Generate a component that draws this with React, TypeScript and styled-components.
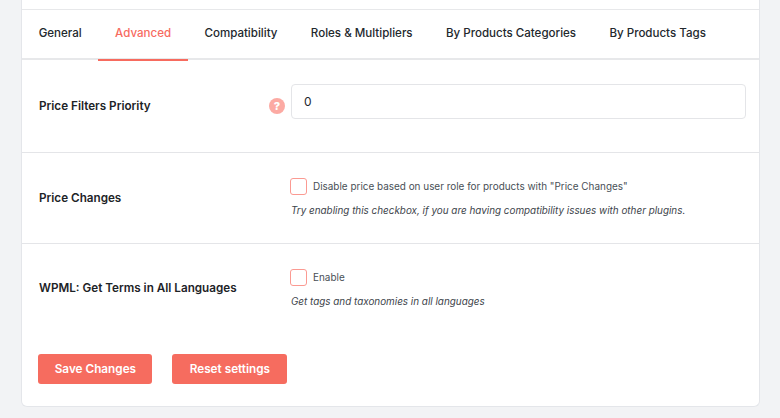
import React from "react";
import styled, { createGlobalStyle } from "styled-components";

const Global = createGlobalStyle`
  html, body { margin: 0; padding: 0; background: #f2f3f5; }
  body { font-family: Inter, "Liberation Sans", sans-serif; height: 418px; overflow: hidden; }
`;

const Page = styled.div`
  width: 780px;
  height: 418px;
  padding-left: 21px;
  box-sizing: border-box;
`;

const Card = styled.main`
  width: 739px;
  height: 407px;
  box-sizing: border-box;
  background: #fff;
  border: 1px solid #e4e6ea;
  border-top: 0;
  border-radius: 0 0 6px 6px;
  padding-top: 9px;
  display: flex;
  flex-direction: column;
`;

const Tabs = styled.nav`
  display: flex;
  height: 51px;
  box-sizing: border-box;
  border-top: 1px solid #e7e8ea;
  border-bottom: 2px solid #e7e8ea;
`;

const Tab = styled.div<{ $active?: boolean }>`
  height: 51px;
  box-sizing: border-box;
  padding: 0 16.7px 4px;
  display: flex;
  align-items: center;
  font-size: 11.55px;
  font-weight: 500;
  white-space: nowrap;
  color: ${(p) => (p.$active ? "#f76b5f" : "#23282d")};
  border-bottom: 2px solid ${(p) => (p.$active ? "#f76b5f" : "transparent")};
`;

const Row = styled.section<{ $height: number; $divider?: boolean }>`
  height: ${(p) => p.$height}px;
  box-sizing: border-box;
  display: flex;
  padding-left: 17px;
  border-bottom: ${(p) => (p.$divider ? "1px solid #e4e5e8" : "0")};
`;

const Label = styled.h3<{ $top: number }>`
  width: 230px;
  flex: none;
  margin: 0;
  padding-top: ${(p) => p.$top}px;
  font-size: 11.7px;
  line-height: 16px;
  font-weight: 600;
  color: #1d2327;
`;

const Help = styled.span`
  width: 16px;
  height: 16px;
  flex: none;
  margin: 38px 6px 0 0;
  border-radius: 50%;
  background: #fcaaa3;
  color: #fff;
  font-size: 11px;
  font-weight: 800;
  line-height: 16px;
  text-align: center;
`;

const Input = styled.div`
  width: 455px;
  height: 35px;
  margin-top: 24px;
  box-sizing: border-box;
  border: 1px solid #e4e5e8;
  border-radius: 4px;
  padding-left: 12px;
  font-size: 12px;
  line-height: 33px;
  color: #23282d;
`;

const Control = styled.div<{ $top: number; $left: number }>`
  margin-left: ${(p) => p.$left}px;
  padding-top: ${(p) => p.$top}px;
`;

const CheckLine = styled.label`
  display: flex;
  align-items: center;
  gap: 6px;
  font-size: 9.93px;
  line-height: 17px;
  color: #484f56;
`;

const Box = styled.span`
  width: 17px;
  height: 17px;
  box-sizing: border-box;
  border: 1px solid #fb9a92;
  border-radius: 3px;
  background: #fff;
`;

const Note = styled.p`
  margin: 8px 0 0 1px;
  font-size: 9.9px;
  line-height: 14px;
  font-style: italic;
  color: #3c434a;
`;

const Actions = styled.footer`
  display: flex;
  gap: 20px;
  padding: 15px 0 0 16.4px;
`;

const Button = styled.button`
  height: 30px;
  padding: 0;
  border: 0;
  border-radius: 3px;
  background: #f66c5f;
  color: #fff;
  font-family: inherit;
  font-size: 11.75px;
  font-weight: 600;
`;

const SaveButton = styled(Button)`
  width: 114px;
`;

const ResetButton = styled(Button)`
  width: 115px;
`;

export default function App() {
  return (
    <Page>
      <Global />
      <Card>
        <Tabs>
          <Tab>General</Tab>
          <Tab $active>Advanced</Tab>
          <Tab>Compatibility</Tab>
          <Tab>Roles &amp; Multipliers</Tab>
          <Tab>By Products Categories</Tab>
          <Tab>By Products Tags</Tab>
        </Tabs>
        <Row $height={93} $divider>
          <Label $top={38}>Price Filters Priority</Label>
          <Help>?</Help>
          <Input>0</Input>
        </Row>
        <Row $height={91} $divider>
          <Label $top={37}>Price Changes</Label>
          <Control $top={25} $left={21}>
            <CheckLine>
              <Box />
              Disable price based on user role for products with "Price Changes"
            </CheckLine>
            <Note>Try enabling this checkbox, if you are having compatibility issues with other plugins.</Note>
          </Control>
        </Row>
        <Row $height={95}>
          <Label $top={36}>WPML: Get Terms in All Languages</Label>
          <Control $top={25} $left={21}>
            <CheckLine>
              <Box />
              Enable
            </CheckLine>
            <Note>Get tags and taxonomies in all languages</Note>
          </Control>
        </Row>
        <Actions>
          <SaveButton>Save Changes</SaveButton>
          <ResetButton>Reset settings</ResetButton>
        </Actions>
      </Card>
    </Page>
  );
}
